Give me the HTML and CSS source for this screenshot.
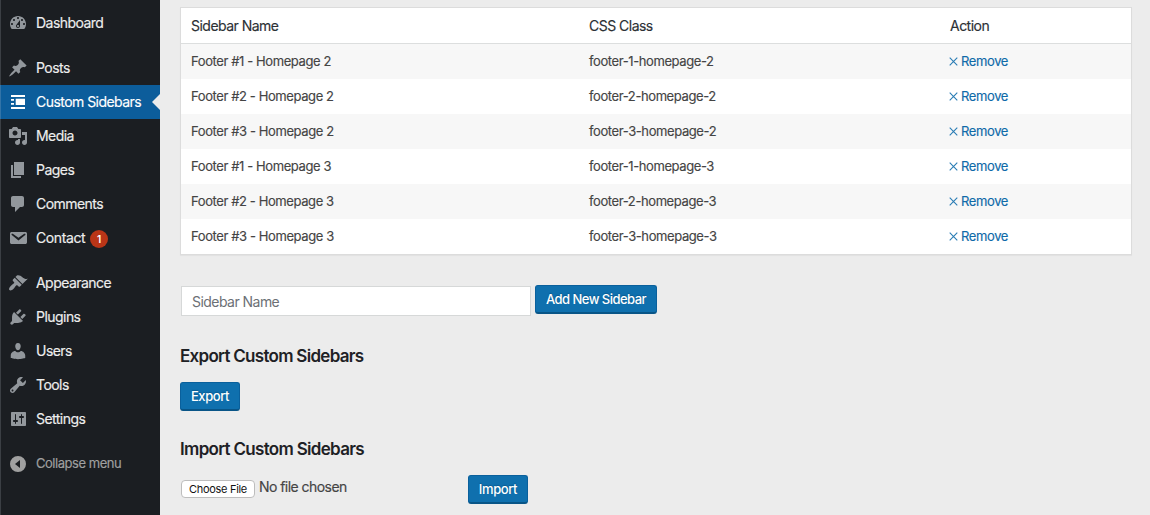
FILE: index.html
```html
<!DOCTYPE html>
<html lang="en">
<head>
<meta charset="utf-8">
<title>Custom Sidebars</title>
<link rel="stylesheet" href="styles.css">
</head>
<body>
<nav class="menu">
  <ul class="group">
    <li class="item"><svg class="icon" viewBox="0 0 20 20"><path d="M3.76 16h12.48c1.1-1.37 1.76-3.11 1.76-5 0-4.42-3.58-8-8-8s-8 3.58-8 8c0 1.89.66 3.63 1.76 5zM10 4c.55 0 1 .45 1 1s-.45 1-1 1-1-.45-1-1 .45-1 1-1zM6 6c.55 0 1 .45 1 1s-.45 1-1 1-1-.45-1-1 .45-1 1-1zm8 0c.55 0 1 .45 1 1s-.45 1-1 1-1-.45-1-1 .45-1 1-1zm-5.37 5.55L12 7v6c0 1.1-.9 2-2 2s-2-.9-2-2c0-.57.24-1.08.63-1.45zM4 10c.55 0 1 .45 1 1s-.45 1-1 1-1-.45-1-1 .45-1 1-1zm12 0c.55 0 1 .45 1 1s-.45 1-1 1-1-.45-1-1 .45-1 1-1zm-5 3c0-.55-.45-1-1-1s-1 .45-1 1 .45 1 1 1 1-.45 1-1z"/></svg><span class="label">Dashboard</span></li>
  </ul>
  <ul class="group">
    <li class="item"><svg class="icon" viewBox="0 0 20 20"><path d="M10.44 3.02l1.82-1.82 6.36 6.35-1.83 1.82c-1.05-.68-2.48-.57-3.41.36l-.75.75c-.92.93-1.04 2.35-.35 3.41l-1.83 1.82-2.41-2.41-2.8 2.79c-.42.42-3.38 2.71-3.8 2.29s1.86-3.39 2.28-3.81l2.79-2.79L4.1 9.36l1.83-1.82c1.05.69 2.48.57 3.4-.36l.75-.75c.93-.92 1.05-2.35.36-3.41z"/></svg><span class="label">Posts</span></li>
    <li class="item current"><svg class="icon" viewBox="0 0 20 20"><path d="M3 3h14v2H3zM3 7h3v1.7H3zM7.7 6.8H17V13H7.7zM3 11h3v1.7H3zM3 15h14v2H3z"/></svg><span class="label">Custom Sidebars</span></li>
    <li class="item"><svg class="icon" viewBox="0 0 20 20"><path d="M13 11V4c0-.55-.45-1-1-1h-1.67L9 1H5L3.67 3H2c-.55 0-1 .45-1 1v7c0 .55.45 1 1 1h10c.55 0 1-.45 1-1zM7 4.5c1.38 0 2.5 1.12 2.5 2.5S8.38 9.5 7 9.5 4.5 8.38 4.5 7 5.62 4.5 7 4.5zM14 6h5v10.5c0 1.38-1.12 2.5-2.5 2.5S14 17.88 14 16.5s1.12-2.5 2.5-2.5c.17 0 .34.02.5.05V9h-3V6zm-4 8.05V13h2v3.5c0 1.38-1.12 2.5-2.5 2.5S7 17.88 7 16.5 8.12 14 9.5 14c.17 0 .34.02.5.05z"/></svg><span class="label">Media</span></li>
    <li class="item"><svg class="icon" viewBox="0 0 20 20"><path d="M6 15V2h10v13H6zm-1 1h8v2H3V5h2v11z"/></svg><span class="label">Pages</span></li>
    <li class="item"><svg class="icon" viewBox="0 0 20 20"><path d="M5 2h9c1.1 0 2 .9 2 2v7c0 1.1-.9 2-2 2h-2l-5 5v-5H5c-1.1 0-2-.9-2-2V4c0-1.1.9-2 2-2z"/></svg><span class="label">Comments</span></li>
    <li class="item"><svg class="icon" viewBox="0 0 20 20"><path d="M3.87 4h13.25C18.37 4 19 4.59 19 5.79v8.42c0 1.19-.63 1.79-1.88 1.79H3.87c-1.25 0-1.88-.6-1.88-1.79V5.79c0-1.2.63-1.79 1.88-1.79zm6.62 8.6l6.74-5.53c.24-.2.43-.66.13-1.07-.29-.41-.82-.42-1.17-.17l-5.7 3.86L4.8 5.83c-.35-.25-.88-.24-1.17.17-.3.41-.11.87.13 1.07z"/></svg><span class="label contact">Contact</span><span class="badge">1</span></li>
  </ul>
  <ul class="group">
    <li class="item"><svg class="icon" viewBox="0 0 20 20"><path d="M14.48 11.06L7.41 3.99l1.5-1.5c.5-.56 2.3-.47 3.51.32 1.21.8 1.43 1.28 2.91 2.1 1.18.64 2.45 1.26 4.45.85zm-.71.71L6.7 4.7 4.93 6.47c-.39.39-.39 1.02 0 1.41l1.06 1.06c.39.39.39 1.03 0 1.42-.6.6-1.43 1.11-2.21 1.69-.35.26-.7.53-1.01.84C1.43 14.23.4 16.08 1.4 17.07c.99 1 2.84-.03 4.18-1.36.31-.31.58-.66.85-1.02.57-.78 1.08-1.61 1.69-2.21.39-.39 1.02-.39 1.41 0l1.06 1.06c.39.39 1.02.39 1.41 0z"/></svg><span class="label">Appearance</span></li>
    <li class="item"><svg class="icon" viewBox="0 0 20 20"><path d="M13.11 4.36L9.87 7.6 8 5.73l3.24-3.24c.35-.34 1.05-.2 1.56.32.52.51.66 1.21.31 1.55zm-8 1.77l.91-1.12 9.01 9.01-1.19.84c-.71.71-2.63 1.16-3.82 1.16H6.14L4.9 17.26c-.59.59-1.54.59-2.12 0-.59-.58-.59-1.53 0-2.12l1.24-1.24v-3.88c0-1.13.4-3.19 1.09-3.89zm7.26 3.97l3.24-3.24c.34-.35 1.04-.21 1.55.31.52.51.66 1.21.31 1.55l-3.24 3.25z"/></svg><span class="label">Plugins</span></li>
    <li class="item"><svg class="icon" viewBox="0 0 20 20"><path d="M10 9.25c-2.27 0-2.73-3.44-2.73-3.44C7 4.02 7.82 2 9.97 2c2.16 0 2.98 2.02 2.71 3.81 0 0-.41 3.44-2.68 3.44zm0 2.1c1.2 0 2.1-.5 2.72-1.35 2.39 0 4.52 2.33 4.52 4.53v2.49s-3.65 1.13-7.24 1.13c-3.65 0-7.24-1.13-7.24-1.13v-2.49c0-2.25 1.94-4.53 4.52-4.53.62.85 1.52 1.35 2.72 1.35z"/></svg><span class="label">Users</span></li>
    <li class="item"><svg class="icon" viewBox="0 0 20 20"><path d="M16.68 9.77c-1.34 1.34-3.3 1.67-4.95.99l-5.41 6.52c-.99.99-2.59.99-3.58 0s-.99-2.59 0-3.57l6.52-5.42c-.68-1.65-.35-3.61.99-4.95 1.28-1.28 3.12-1.62 4.72-1.06l-2.89 2.89 2.82 2.82 2.86-2.87c.53 1.58.18 3.39-1.08 4.65zM3.81 16.21c.4.39 1.04.39 1.43 0 .4-.4.4-1.04 0-1.43-.39-.4-1.03-.4-1.43 0-.39.39-.39 1.03 0 1.43z"/></svg><span class="label">Tools</span></li>
    <li class="item"><svg class="icon" viewBox="0 0 20 20"><path d="M18 16V4c0-.55-.45-1-1-1H4c-.55 0-1 .45-1 1v12c0 .55.45 1 1 1h13c.55 0 1-.45 1-1zM8 11h1c.55 0 1 .45 1 1s-.45 1-1 1H8v1.5c0 .28-.22.5-.5.5s-.5-.22-.5-.5V13H6c-.55 0-1-.45-1-1s.45-1 1-1h1V5.5c0-.28.22-.5.5-.5s.5.22.5.5V11zm5-2h-1c-.55 0-1-.45-1-1s.45-1 1-1h1V5.5c0-.28.22-.5.5-.5s.5.22.5.5V7h1c.55 0 1 .45 1 1s-.45 1-1 1h-1v5.5c0 .28-.22.5-.5.5s-.5-.22-.5-.5V9z"/></svg><span class="label">Settings</span></li>
  </ul>
  <ul class="group">
    <li class="item collapse"><svg class="icon" viewBox="0 0 20 20"><path fill-rule="evenodd" d="M10 2a8 8 0 1 0 0 16 8 8 0 0 0 0-16zM12 6v8l-5-4z"/></svg><span class="label">Collapse menu</span></li>
  </ul>
</nav>
<main class="content">
  <table class="sidebars">
    <thead><tr><th class="name">Sidebar Name</th><th class="class">CSS Class</th><th>Action</th></tr></thead>
    <tbody>
      <tr><td>Footer #1 - Homepage 2</td><td>footer-1-homepage-2</td><td><a class="remove"><svg class="cross" viewBox="0 0 9 9"><path d="M.7.7l7.6 7.6M8.3.7L.7 8.3"/></svg>Remove</a></td></tr>
      <tr><td>Footer #2 - Homepage 2</td><td>footer-2-homepage-2</td><td><a class="remove"><svg class="cross" viewBox="0 0 9 9"><path d="M.7.7l7.6 7.6M8.3.7L.7 8.3"/></svg>Remove</a></td></tr>
      <tr><td>Footer #3 - Homepage 2</td><td>footer-3-homepage-2</td><td><a class="remove"><svg class="cross" viewBox="0 0 9 9"><path d="M.7.7l7.6 7.6M8.3.7L.7 8.3"/></svg>Remove</a></td></tr>
      <tr><td>Footer #1 - Homepage 3</td><td>footer-1-homepage-3</td><td><a class="remove"><svg class="cross" viewBox="0 0 9 9"><path d="M.7.7l7.6 7.6M8.3.7L.7 8.3"/></svg>Remove</a></td></tr>
      <tr><td>Footer #2 - Homepage 3</td><td>footer-2-homepage-3</td><td><a class="remove"><svg class="cross" viewBox="0 0 9 9"><path d="M.7.7l7.6 7.6M8.3.7L.7 8.3"/></svg>Remove</a></td></tr>
      <tr><td>Footer #3 - Homepage 3</td><td>footer-3-homepage-3</td><td><a class="remove"><svg class="cross" viewBox="0 0 9 9"><path d="M.7.7l7.6 7.6M8.3.7L.7 8.3"/></svg>Remove</a></td></tr>
    </tbody>
  </table>
  <form class="add">
    <input class="field" type="text" placeholder="Sidebar Name">
    <button class="button add-button" type="button">Add New Sidebar</button>
  </form>
  <h2 class="heading">Export Custom Sidebars</h2>
  <button class="button" type="button">Export</button>
  <h2 class="heading import-heading">Import Custom Sidebars</h2>
  <form class="import">
    <div class="file"><button class="choose" type="button">Choose File</button><span class="chosen">No file chosen</span></div>
    <button class="button" type="button">Import</button>
  </form>
</main>
</body>
</html>
```
FILE: styles.css
```css
* { box-sizing: border-box; }
body {
  margin: 0;
  height: 515px;
  display: flex;
  overflow: hidden;
  background: #ececec;
  font-family: Inter, "Liberation Sans", sans-serif;
  font-size: 13px;
  color: #444;
}
.menu {
  width: 160px;
  flex: none;
  padding-top: 6px;
  background: #1b1e22;
  box-shadow: inset 1px 0 #3b3f44;
}
.group { margin: 0 0 11px; padding: 0; list-style: none; }
.item {
  position: relative;
  display: flex;
  align-items: center;
  height: 34px;
  padding-left: 8px;
  font-size: 14px;
  letter-spacing: -0.54px;
  color: #eee;
  white-space: nowrap;
}
.label { padding-bottom: 2px; -webkit-text-stroke: 0.15px; }
.icon { width: 20px; height: 20px; margin-right: 8px; flex: none; fill: #92979c; }
.current { background: #0c5d9b; color: #fff; box-shadow: inset 1px 0 #3274a8; }
.current .icon { fill: #fff; }
.current::after {
  content: "";
  position: absolute;
  right: 0;
  top: 9px;
  border: 8px solid transparent;
  border-left-width: 0;
  border-right-color: #ececec;
}
.contact { width: 54px; letter-spacing: -0.4px; }
.badge {
  width: 18px;
  height: 18px;
  margin-top: 2px;
  border-radius: 50%;
  background: #ba3517;
  color: #fff;
  font-size: 10px;
  font-weight: 600;
  line-height: 18px;
  letter-spacing: 0;
  text-align: center;
}
.collapse { font-size: 13px; letter-spacing: -0.46px; color: #a0a0a0; }
.collapse .icon { fill: #a0a0a0; }
.collapse .label { letter-spacing: -0.46px; }
.content { flex: 1; padding: 7px 18px 0 20px; }
.sidebars {
  width: 952px;
  table-layout: fixed;
  border-collapse: separate;
  border-spacing: 0;
  border: 1px solid #dcdcdc;
  background: #fff;
  box-shadow: 0 1px 1px rgba(0, 0, 0, .04);
}
.sidebars th, .sidebars td { height: 35px; padding: 0 10px; text-align: left; font-weight: 400; }
.sidebars th { height: 36px; border-bottom: 1px solid #dcdede; font-size: 14px; letter-spacing: -0.52px; color: #2c3035; -webkit-text-stroke: 0.15px; }
.sidebars td { padding-bottom: 1px; letter-spacing: -0.4px; -webkit-text-stroke: 0.15px; }
.sidebars tbody tr:nth-child(odd) { background: #f7f7f7; }
.name { width: 398px; }
.class { width: 361px; }
.remove { display: flex; align-items: center; color: #0f6aa9; letter-spacing: -0.38px; }
.cross { width: 9px; height: 9px; margin: 1px 3px 0 -1px; fill: none; stroke: #2a7db5; stroke-width: 1.1; }
.add { display: flex; align-items: flex-start; margin: 30px 0 0; }
.field {
  width: 350px;
  height: 30px;
  margin: 1px 4px 0 1px;
  padding: 1px 10px 0;
  border: 1px solid #d6d8d8;
  background: #fff;
  font: 14px Inter, "Liberation Sans", sans-serif;
  letter-spacing: -0.54px;
}
.field::placeholder { color: #6c7075; opacity: 1; }
.button {
  display: block;
  width: 60px;
  height: 29px;
  padding: 0 0 1px;
  border: 1px solid #0a609c;
  border-bottom: 2px solid #095587;
  border-radius: 3px;
  background: #0f70ae;
  color: #fff;
  font: 500 13px Inter, "Liberation Sans", sans-serif;
  letter-spacing: -0.4px;
  text-shadow: 0 -1px 1px #0a5b91;
}
.add-button { width: 122px; letter-spacing: -0.54px; }
.heading { margin: 30px 0 16px; font-size: 17px; line-height: 20px; font-weight: 600; letter-spacing: -0.71px; color: #1e2125; }
.import-heading { margin: 28px 0 16px; letter-spacing: -0.69px; }
.import { display: flex; align-items: flex-start; }
.file { display: flex; align-items: flex-start; width: 288px; padding-left: 1px; }
.choose {
  width: 74px;
  height: 18px;
  margin: 5px 4px 0 0;
  padding: 0;
  border: 1px solid #bdbdbd;
  border-radius: 4px;
  background: #fff;
  color: #111;
  font: 11px Inter, "Liberation Sans", sans-serif;
  letter-spacing: -0.3px;
}
.chosen { font-size: 14px; line-height: 24px; letter-spacing: -0.55px; -webkit-text-stroke: 0.15px; }
```
